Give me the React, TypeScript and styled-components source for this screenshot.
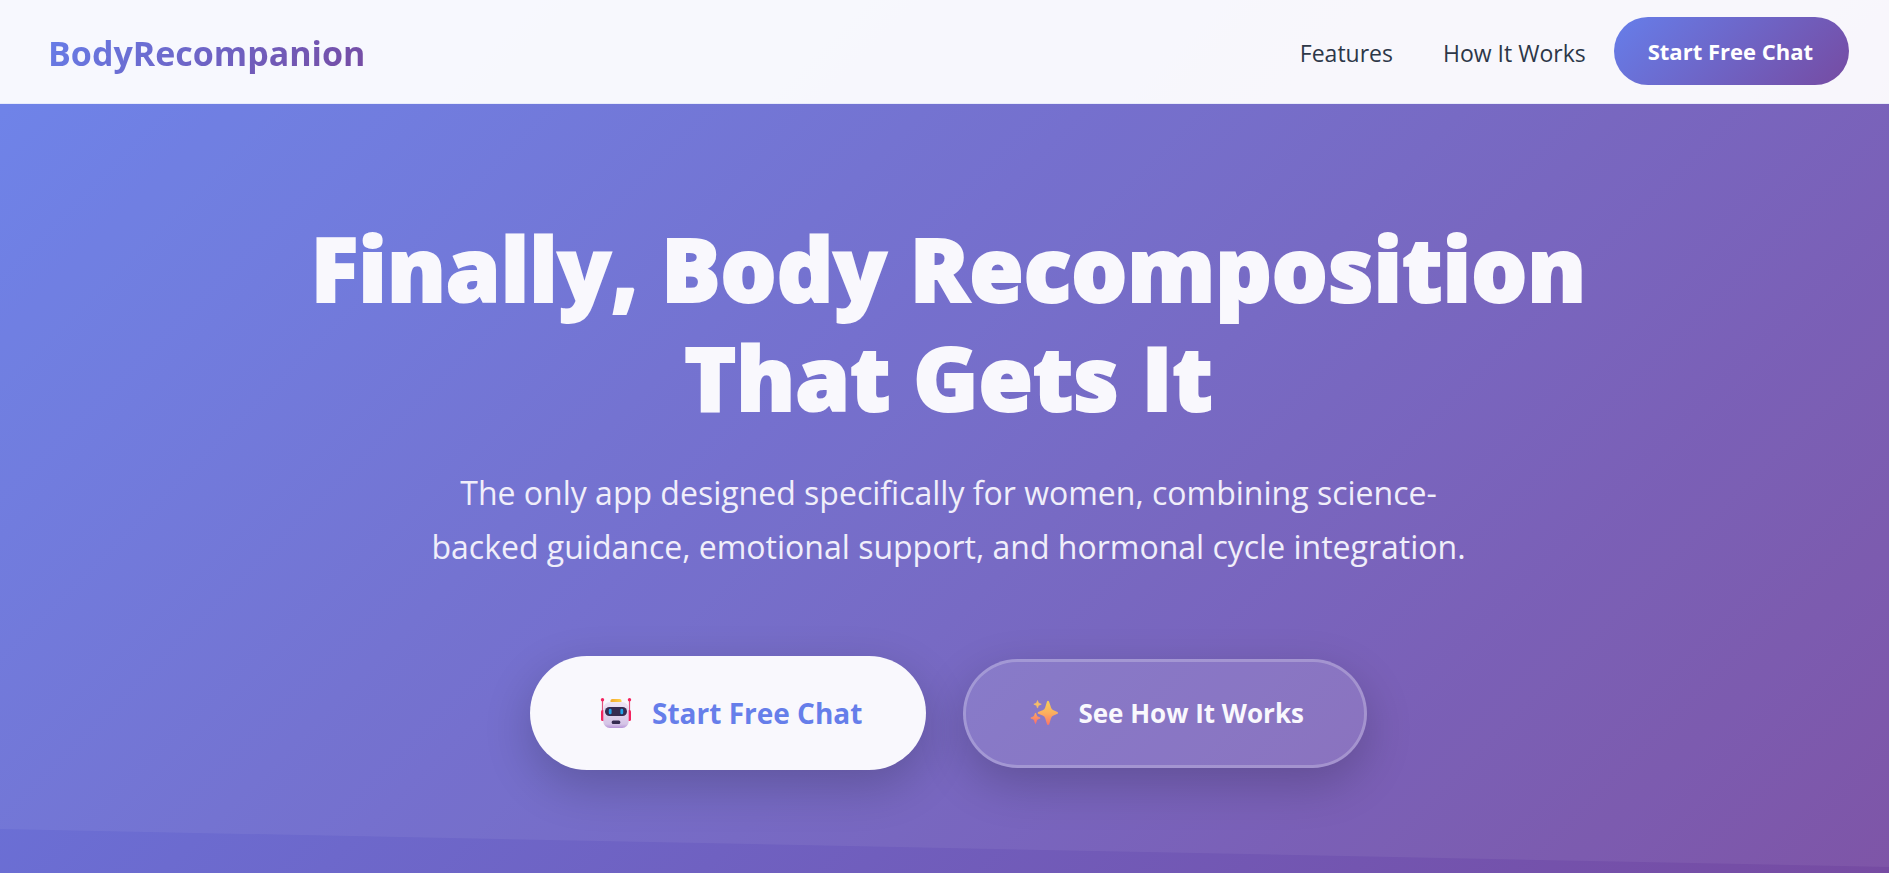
import React from "react";
import styled, { createGlobalStyle, css } from "styled-components";

const brand = "linear-gradient(135deg, #667eea 0%, #764ba2 100%)";

const GlobalStyle = createGlobalStyle`
  * { box-sizing: border-box; }
  body {
    margin: 0;
    font-family: "Segoe UI", "Open Sans", "Noto Sans", sans-serif;
    color: #2d3748;
  }
`;

const Page = styled.div`
  min-height: 100vh;
  display: flex;
  flex-direction: column;
  background: ${brand};
`;

const Header = styled.header`
  display: flex;
  align-items: center;
  justify-content: space-between;
  height: 104px;
  padding: 0 40px 0 48px;
  background: rgba(255, 255, 255, 0.95);
  border-bottom: 1px solid rgba(102, 126, 234, 0.1);
`;

const Logo = styled.a`
  padding-top: 2px;
  font-size: 34px;
  line-height: 48px;
  font-weight: 700;
  text-decoration: none;
  color: transparent;
  background: ${brand};
  background-clip: text;
  -webkit-background-clip: text;
`;

const Nav = styled.nav`
  display: flex;
  align-items: center;
`;

const NavLink = styled.a`
  margin-right: 50px;
  padding-top: 2px;
  font-size: 23px;
  line-height: 32px;
  color: #2d3748;
  text-decoration: none;

  &:last-of-type {
    margin-right: 28px;
  }
`;

const NavButton = styled.button`
  height: 68px;
  margin-bottom: 2px;
  padding: 0 36px 0 34px;
  border: 0;
  border-radius: 34px;
  background: ${brand};
  color: #fff;
  font: inherit;
  font-size: 22px;
  font-weight: 700;
  cursor: pointer;
`;

const Hero = styled.main`
  flex: 1;
  display: flex;
  flex-direction: column;
  align-items: center;
  padding: 110px 48px 104px 56px;
  background: rgba(255, 255, 255, 0.06);
  clip-path: polygon(0 0, 100% 0, 100% calc(100% - 7px), 0 calc(100% - 45px));
  text-align: center;
`;

const Title = styled.h1`
  max-width: 1320px;
  margin: 0 0 34px;
  color: #f9f8fd;
  font-size: 88px;
  line-height: 109px;
  font-weight: 800;
  -webkit-text-stroke: 2px #f9f8fd;
`;

const Lead = styled.p`
  max-width: 1056px;
  margin: 0 0 82px;
  color: #f0eefa;
  font-size: 32px;
  line-height: 54px;
`;

const Actions = styled.div`
  display: flex;
  align-items: center;
  justify-content: center;
  gap: 37px;
`;

const ActionButton = styled.button<{ $primary?: boolean }>`
  display: flex;
  align-items: center;
  justify-content: center;
  gap: 20px;
  border-radius: 57px;
  font: inherit;
  cursor: pointer;
  box-shadow: 0 16px 48px rgba(0, 0, 0, 0.2);

  ${({ $primary }) =>
    $primary
      ? css`
          height: 114px;
          padding: 0 64px 0 70px;
          border: 0;
          background: #f9f8fd;
          color: #667eea;
          font-size: 28px;
          font-weight: 700;
        `
      : css`
          height: 109px;
          padding: 0 60px 0 64px;
          border: 3px solid rgba(255, 255, 255, 0.32);
          background: rgba(255, 255, 255, 0.12);
          background-clip: padding-box;
          color: #f9f8fd;
          font-size: 26px;
          font-weight: 700;
        `}
`;

const RobotIcon = () => (
  <svg width="32" height="32" viewBox="0 0 32 32" aria-hidden="true">
    <defs>
      <linearGradient id="face" x1="0" y1="0" x2="0" y2="1">
        <stop offset="0" stopColor="#eee5f5" />
        <stop offset="0.85" stopColor="#d5c4e6" />
        <stop offset="1" stopColor="#b795d8" />
      </linearGradient>
      <linearGradient id="cap" x1="0" y1="0" x2="1" y2="0">
        <stop offset="0" stopColor="#f2a92e" />
        <stop offset="1" stopColor="#ffd24a" />
      </linearGradient>
    </defs>
    <path d="M2.500 3v13M29.500 3v13" stroke="#e0527e" strokeWidth="1.200" />
    <circle cx="2.500" cy="2.700" r="1.700" fill="#f3235f" />
    <circle cx="29.500" cy="2.700" r="1.700" fill="#f3235f" />
    <rect x="1" y="13" width="4" height="11" rx="1.500" fill="#f3235f" />
    <rect x="27" y="13" width="4" height="11" rx="1.500" fill="#f3235f" />
    <rect x="10.500" y="2" width="11" height="6" rx="1.800" fill="url(#cap)" />
    <rect x="3.300" y="5" width="25.400" height="26" rx="6.500" fill="url(#face)" />
    <rect x="5" y="10" width="22" height="9" rx="4.500" fill="#352b50" />
    <rect x="8.800" y="11.800" width="2.800" height="5.400" rx="1.300" fill="#22a2e8" />
    <rect x="20.400" y="11.800" width="2.800" height="5.400" rx="1.300" fill="#22a2e8" />
    <rect x="11.700" y="23.500" width="8.600" height="3.400" rx="1.500" fill="#352b50" />
  </svg>
);

const SparklesIcon = () => (
  <svg width="28" height="28" viewBox="0 0 28 28" aria-hidden="true">
    <defs>
      <linearGradient id="spark" x1="0" y1="0" x2="0" y2="1">
        <stop offset="0" stopColor="#f9cf55" />
        <stop offset="0.5" stopColor="#fbb05e" />
        <stop offset="1" stopColor="#fb7468" />
      </linearGradient>
      <linearGradient id="spark-low" x1="0" y1="0" x2="0" y2="1">
        <stop offset="0" stopColor="#fca85f" />
        <stop offset="1" stopColor="#fb6f6c" />
      </linearGradient>
    </defs>
    <path
      d="M17 2.500q1-1.500 2 0l2 6q.6 2 2.500 2.700l4 1.800q1 1 0 1.800l-4 1.800q-1.900.8-2.500 2.700l-1.800 6q-1.200 1.500-2.200 0l-1.800-6q-.6-1.900-2.500-2.700l-4.500-1.800q-1-.8 0-1.800l4.500-1.800q1.900-.7 2.500-2.700z"
      fill="url(#spark)"
    />
    <path
      d="M7.500 1.500l1 2.500 2.800 1.200-2.800 1.200-1 2.700-1-2.700L3.800 5.200 6.500 4z"
      fill="#f7bd68"
      stroke="#f7bd68"
      strokeWidth="0.600"
    />
    <path
      d="M5.500 14l1.400 3.500 3.300 1.500-3.300 1.500-1.400 4-1.400-4L.8 19l3.300-1.500z"
      fill="url(#spark-low)"
      stroke="url(#spark-low)"
      strokeWidth="0.800"
    />
  </svg>
);

export default function App() {
  return (
    <>
      <GlobalStyle />
      <Page>
        <Header>
          <Logo href="#">BodyRecompanion</Logo>
          <Nav>
            <NavLink href="#features">Features</NavLink>
            <NavLink href="#how">How It Works</NavLink>
            <NavButton type="button">Start Free Chat</NavButton>
          </Nav>
        </Header>
        <Hero>
          <Title>Finally, Body Recomposition That Gets It</Title>
          <Lead>
            The only app designed specifically for women, combining science-backed
            guidance, emotional support, and hormonal cycle integration.
          </Lead>
          <Actions>
            <ActionButton type="button" $primary>
              <RobotIcon />
              Start Free Chat
            </ActionButton>
            <ActionButton type="button">
              <SparklesIcon />
              See How It Works
            </ActionButton>
          </Actions>
        </Hero>
      </Page>
    </>
  );
}
